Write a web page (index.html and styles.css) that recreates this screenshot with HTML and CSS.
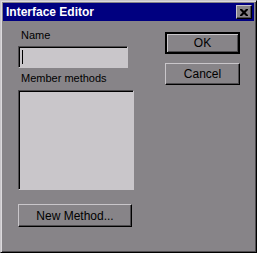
FILE: index.html
```html
<!DOCTYPE html>
<html lang="en">
<head>
    <meta charset="UTF-8">
    <title>Interface Editor</title>
    <link rel="stylesheet" href="styles.css">
</head>
<body>
    <div class="window">
        <div class="titlebar">
            <span class="title">Interface Editor</span>
            <button class="close-btn">
                <svg width="8" height="7" viewBox="0 0 8 7">
                    <path d="M0 0h2l2 2 2-2h2v1l-2.5 2.5 2.5 2.5v1h-2l-2-2-2 2h-2v-1l2.5-2.5-2.5-2.5z" fill="#000"/>
                </svg>
            </button>
        </div>
        <div class="content">
            <div class="left">
                <label class="label">Name</label>
                <div class="textbox"><span class="caret"></span></div>
                <label class="label label-methods">Member methods</label>
                <div class="listbox"></div>
                <button class="btn btn-new">New Method...</button>
            </div>
            <div class="right">
                <button class="btn btn-default">OK</button>
                <button class="btn">Cancel</button>
            </div>
        </div>
    </div>
</body>
</html>
```

FILE: styles.css
```css
body {
    margin: 0;
    background-color: #878488;
    font-family: "Liberation Sans", Arial, sans-serif;
    font-size: 11px;
}
.window {
    width: 257px;
    height: 253px;
    box-sizing: border-box;
    background-color: #878488;
    border: 1px solid;
    border-color: #c9c6ca #000 #000 #c9c6ca;
    box-shadow: inset 1px 1px 0 #dcdadd, inset -1px -1px 0 #4e4c4f;
    padding: 2px;
}
.titlebar {
    height: 18px;
    background-color: #000080;
    display: flex;
    align-items: center;
    justify-content: space-between;
    padding: 0 2px 0 3px;
}
.title {
    color: #fff;
    font-weight: bold;
    font-size: 12px;
}
.close-btn {
    width: 16px;
    height: 14px;
    padding: 0;
    display: flex;
    align-items: center;
    justify-content: center;
    background-color: #878488;
    border: 1px solid;
    border-color: #c9c6ca #000 #000 #c9c6ca;
    box-shadow: inset -1px -1px 0 #4e4c4f;
}
.content {
    display: flex;
    justify-content: space-between;
    padding: 7px 15px 0 15px;
}
.left {
    display: flex;
    flex-direction: column;
    align-items: flex-start;
}
.label {
    line-height: 14px;
    padding-left: 3px;
    color: #000;
}
.textbox {
    margin-top: 4px;
    width: 110px;
    height: 22px;
    box-sizing: border-box;
    background-color: #c9c6ca;
    border: 1px solid;
    border-color: #4e4c4f #c9c6ca #c9c6ca #4e4c4f;
    box-shadow: inset 1px 1px 0 #000;
    padding: 3px 0 0 3px;
}
.caret {
    display: block;
    width: 1px;
    height: 14px;
    background-color: #000;
}
.label-methods {
    margin-top: 3px;
}
.listbox {
    margin-top: 5px;
    width: 116px;
    height: 100px;
    box-sizing: border-box;
    background-color: #c9c6ca;
    border: 1px solid;
    border-color: #4e4c4f #c9c6ca #c9c6ca #4e4c4f;
    box-shadow: inset 1px 1px 0 #000;
}
.btn {
    width: 75px;
    height: 22px;
    box-sizing: border-box;
    padding: 0;
    font-family: "Liberation Sans", Arial, sans-serif;
    font-size: 12px;
    color: #000;
    background-color: #878488;
    border: 1px solid;
    border-color: #c9c6ca #000 #000 #c9c6ca;
    box-shadow: inset -1px -1px 0 #4e4c4f;
}
.btn-new {
    margin-top: 14px;
    width: 114px;
    height: 23px;
}
.right {
    display: flex;
    flex-direction: column;
    gap: 9px;
    padding-top: 4px;
    margin-right: -1px;
}
.btn-default {
    border: 2px solid #000;
    box-shadow: inset 1px 1px 0 #c9c6ca, inset -1px -1px 0 #4e4c4f;
}
```
